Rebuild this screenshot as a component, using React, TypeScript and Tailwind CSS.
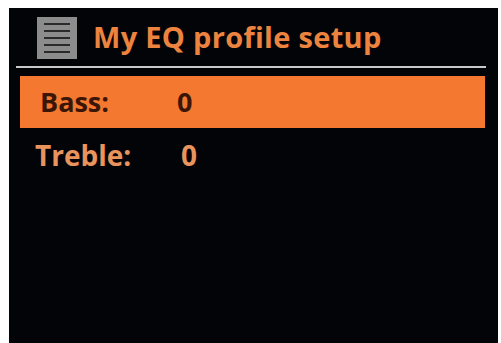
export default function App() {
  return (
    <div className="w-[501px] h-[343px] bg-white pt-[8px] pl-[9px]">
      <div
        className="w-[489px] h-[335px] bg-[#030407] flex flex-col"
        style={{ fontFamily: '"Open Sans", "Liberation Sans", sans-serif' }}
      >
        <div className="flex items-center h-[58px] pl-[28px] gap-[16px]">
          <div className="w-[40px] h-[42px] bg-[#8c8c8c] flex flex-col justify-center gap-[5px] px-[7px] mt-[2px]">
            <div className="h-[2px] bg-[#2a2a2a]" />
            <div className="h-[2px] bg-[#2a2a2a]" />
            <div className="h-[2px] bg-[#2a2a2a]" />
            <div className="h-[2px] bg-[#2a2a2a]" />
            <div className="h-[2px] bg-[#2a2a2a]" />
          </div>
          <span className="text-[29px] font-bold text-[#ec843f] tracking-[0.3px]">My EQ profile setup</span>
        </div>
        <div className="ml-[7px] w-[470px] h-[2px] bg-[#c9c9c9]" />
        <div className="ml-[11px] mt-[8px] w-[465px] h-[52px] bg-[#f4782f] flex items-center pl-[20px] text-[27px] font-bold text-[#3b1606]">
          <span className="w-[137px]">Bass:</span>
          <span>0</span>
        </div>
        <div className="ml-[11px] h-[54px] flex items-center pl-[15px] text-[28px] font-bold text-[#e9935d]">
          <span className="w-[146px]">Treble:</span>
          <span>0</span>
        </div>
      </div>
    </div>
  );
}
